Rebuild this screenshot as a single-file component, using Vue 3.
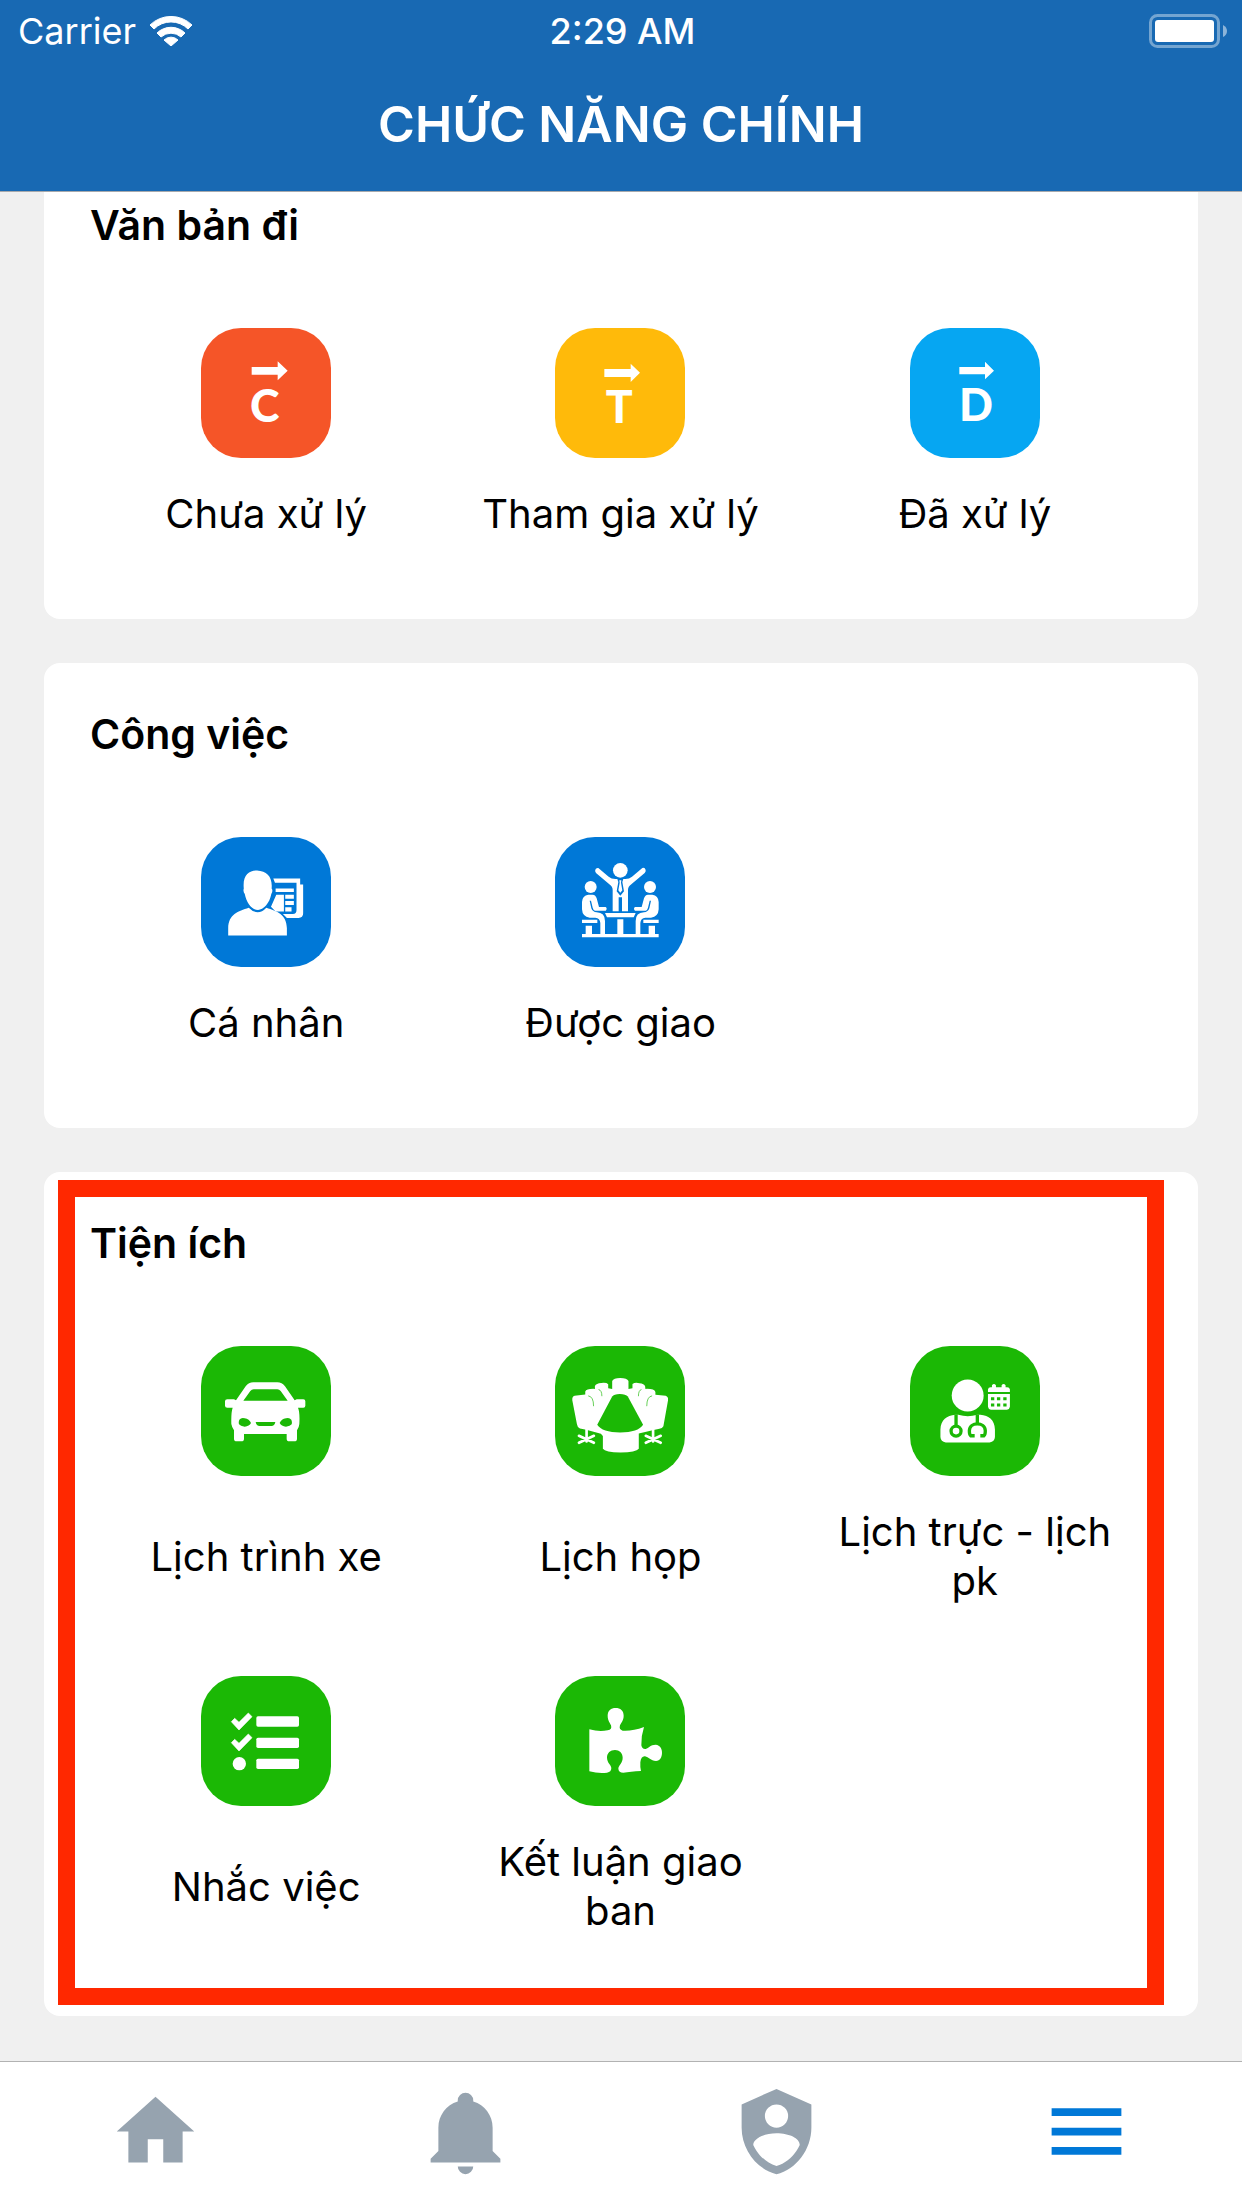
<script setup>
import { ref } from 'vue'

// Tile glyphs: white by default, currentColor is the tile colour and cuts shapes out.
const glyphs = {
  pending: {
    box: '0 0 390 390',
    body: `<path d="M152 117H230V100L260 128L230 157V140H152Z"/>
      <text x="191" y="281" text-anchor="middle" font-family="Lato, sans-serif" font-weight="900" font-size="134">C</text>`
  },
  joined: {
    box: '0 0 390 390',
    body: `<path d="M148 123H227V107L255 134L227 162V147H148Z"/>
      <text x="193" y="286" text-anchor="middle" font-family="Lato, sans-serif" font-weight="900" font-size="134">T</text>`
  },
  done: {
    box: '0 0 390 390',
    body: `<path d="M148 117H225V101L252 128L225 154V139H148Z"/>
      <text x="198" y="278" text-anchor="middle" font-family="Lato, sans-serif" font-weight="900" font-size="134">D</text>`
  },
  personal: {
    box: '63 51 392 390',
    body: `<path d="M281 175H362V193H371V280Q371 294 357 294H322L310 282H340Q351 282 351 270V188H286Z"/>
      <path d="M288 205H343V216H288ZM317 224H343V236H317ZM317 243H343V255H317ZM317 262H336V275H317ZM290 224H313V275H288L274 260Z"/>
      <path d="M145 347V325C146 282 175 274 207 263Q234 291 260 263C292 274 321 282 322 325V347Z"/>
      <path d="M192 205C188 165 208 151 232 151C262 153 279 170 276 205Q281 212 275 222C270 250 251 270 235 270C216 270 200 248 195 222Q189 213 192 205Z"/>`
  },
  assigned: {
    box: '45 51 390 390',
    body: `<circle cx="241" cy="151" r="22"/>
      <path d="M175 144L206 170Q214 177 226 177H256Q268 177 276 170L307 144Q315 142 317 150Q318 155 314 159L274 193Q264 200 264 210V274H246V232H236V274H218V210Q218 200 208 193L168 159Q163 153 167 147Q171 143 175 144Z"/>
      <path d="M232 177H250L247 186L252 214L241 227L230 214L235 186Z" fill="currentColor"/>
      <path d="M238 181H244L243 188L247 211L241 218L235 211L239 188Z"/>
      <path d="M195 279H287L281 292H201ZM232 298H250V342H232Z"/>
      <g><circle cx="152" cy="201" r="18"/>
      <path d="M145 224H158Q167 225 170 235L177 261H197Q203 266 197 272H165Q160 271 158 263L153 242H149L154 265Q158 276 170 277Q195 278 195 303V342H181V309Q180 294 166 293H149Q127 290 126 268V246Q127 226 145 224Z"/>
      <path d="M126 299H172V309H126ZM137 317H156V342H137Z"/></g>
      <g transform="translate(482 0) scale(-1 1)"><circle cx="152" cy="201" r="18"/>
      <path d="M145 224H158Q167 225 170 235L177 261H197Q203 266 197 272H165Q160 271 158 263L153 242H149L154 265Q158 276 170 277Q195 278 195 303V342H181V309Q180 294 166 293H149Q127 290 126 268V246Q127 226 145 224Z"/>
      <path d="M126 299H172V309H126ZM137 317H156V342H137Z"/></g>
      <path d="M126 342H356V352H126Z"/>`
  },
  car: {
    box: '63 51 390 390',
    body: `<path d="M168 214L197 172Q206 160 220 160H292Q306 160 315 172L344 214L350 211H370Q376 211 376 217V230Q376 236 370 236H354Q360 250 358 285Q357 296 351 304V329Q351 337 343 337H328Q320 337 320 329V315H192V329Q192 337 184 337H170Q162 337 162 329V304Q156 296 154 285Q153 250 158 236H142Q135 236 135 230V217Q135 211 142 211H162Z"/>
      <path d="M190 215L211 186Q215 181 221 181H292Q298 181 302 186L323 215ZM178 272Q184 265 194 268Q208 270 213 282Q208 292 194 293Q181 291 177 286Q175 279 178 272ZM334 272Q328 265 318 268Q304 270 299 282Q304 292 318 293Q331 291 335 286Q337 279 334 272ZM227 279H286Q284 291 274 291H239Q229 291 227 279Z" fill="currentColor"/>`
  },
  meeting: {
    box: '46 51 391 391',
    body: `<path d="M218 180V156Q222 147 242 147Q263 147 267 156V180L279 178V165Q287 160 300 163Q314 164 317 172L318 180Q345 179 348 189V198L379 201Q387 204 386 214L372 292Q369 299 360 300L346 303L298 314V360Q290 371 243 371Q197 371 190 360V322L184 315L140 303L121 299Q113 295 112 286L98 214Q97 203 105 201L137 197V188Q140 179 166 180V171Q170 163 185 162Q201 160 206 166V178Z"/>
      <path d="M218 203Q223 195 241 195Q259 195 265 203L311 288Q296 311 242 311Q188 311 173 288Z" fill="currentColor"/>
      <g fill="none" stroke="currentColor" stroke-width="2"><path d="M146 201Q162 203 162 232M177 182Q187 184 187 202M338 201Q322 203 322 232M306 182Q297 184 297 202"/></g>
      <g fill="none" stroke="#fff" stroke-width="8" stroke-linecap="round"><path d="M141 302V325M118 321L163 342M163 321L118 342M141 330V338M341 302V325M319 321L364 342M364 321L319 342M341 330V338"/></g>`
  },
  duty: {
    box: '45 51 390 391',
    body: `<circle cx="218" cy="200" r="48"/>
      <path d="M136 325V302C137 274 155 260 181 258H190Q218 267 247 258H256C282 260 299 274 300 302V325Q299 340 284 341H152Q137 340 136 325Z"/>
      <g fill="none" stroke="currentColor" stroke-width="10"><path d="M183 257V291M247 257V284"/><circle cx="183" cy="307" r="15"/><path d="M239 321H227Q223 318 223 306C224 278 270 278 271 306Q271 318 267 321H256"/></g>
      <path d="M279 189V182Q280 175 287 175H291V169Q297 162 303 169V175H320V169Q326 162 332 169V175H337Q344 175 345 182V189ZM279 195H345V234Q344 242 336 243H288Q280 242 279 234Z"/>
      <path d="M288 205H298V214H288ZM306 205H316V214H306ZM325 205H335V214H325ZM288 224H298V233H288ZM306 224H316V233H306ZM325 224H335V233H325Z" fill="currentColor"/>`
  },
  reminder: {
    box: '0 0 390 390',
    body: `<path d="M91 137L101 127L114 139L142 111L153 122L114 162ZM91 200L101 190L114 202L142 174L153 185L114 225Z" stroke="#fff" stroke-width="2" stroke-linejoin="round"/>
      <circle cx="115" cy="263" r="20"/>
      <rect x="166" y="121" width="128" height="31" rx="5"/>
      <rect x="166" y="185" width="128" height="31" rx="5"/>
      <rect x="166" y="248" width="128" height="31" rx="5"/>`
  },
  conclusion: {
    box: '0 0 390 390',
    body: `<path d="M103 160Q132 168 158 163Q172 161 168 148C165 140 158 134 158 119C158 104 168 96 182 96C196 96 206 104 206 119C206 134 198 140 195 148Q191 161 203 164Q232 166 267 153Q258 180 259 208Q261 220 272 219C282 216 286 206 302 206C316 207 321 219 321 230C321 243 315 254 303 255C287 255 281 243 270 241Q258 240 256 259Q255 274 258 285Q226 287 205 290Q191 290 190 278C191 266 203 262 203 245C203 231 193 222 180 222C166 222 156 231 156 245C157 262 168 266 169 276Q169 288 156 290Q130 293 103 286Z"/>`
  }
}

const sections = [
  {
    title: 'Văn bản đi',
    items: [
      { label: 'Chưa xử lý', glyph: 'pending', tone: 'orange' },
      { label: 'Tham gia xử lý', glyph: 'joined', tone: 'amber' },
      { label: 'Đã xử lý', glyph: 'done', tone: 'sky' }
    ]
  },
  {
    title: 'Công việc',
    items: [
      { label: 'Cá nhân', glyph: 'personal', tone: 'blue' },
      { label: 'Được giao', glyph: 'assigned', tone: 'blue' }
    ]
  },
  {
    title: 'Tiện ích',
    highlighted: true,
    items: [
      { label: 'Lịch trình xe', glyph: 'car', tone: 'green' },
      { label: 'Lịch họp', glyph: 'meeting', tone: 'green' },
      { label: 'Lịch trực - lịch pk', glyph: 'duty', tone: 'green' },
      { label: 'Nhắc việc', glyph: 'reminder', tone: 'green' },
      { label: 'Kết luận giao ban', glyph: 'conclusion', tone: 'green' }
    ]
  }
]

const tabs = [
  { id: 'home', name: 'Trang chủ', path: 'M10,20V14H14V20H19V12H22L12,3L2,12H5V20H10Z' },
  { id: 'alerts', name: 'Thông báo', path: 'M21,19V20H3V19L5,17V11C5,7.9 7.03,5.17 10,4.29C10,4.19 10,4.1 10,4A2,2 0 0,1 12,2A2,2 0 0,1 14,4C14,4.1 14,4.19 14,4.29C16.97,5.17 19,7.9 19,11V17L21,19M14,21A2,2 0 0,1 12,23A2,2 0 0,1 10,21' },
  { id: 'account', name: 'Tài khoản', path: 'M12,1L3,5V11C3,16.55 6.84,21.74 12,23C17.16,21.74 21,16.55 21,11V5L12,1M12,5A3,3 0 0,1 15,8A3,3 0 0,1 12,11A3,3 0 0,1 9,8A3,3 0 0,1 12,5M17.13,17C15.92,18.85 14.11,20.24 12,20.92C9.89,20.24 8.08,18.85 6.87,17C6.53,16.5 6.24,16 6,15.47C6,13.82 8.71,12.47 12,12.47C15.29,12.47 18,13.79 18,15.47C17.76,16 17.47,16.5 17.13,17Z' },
  { id: 'menu', name: 'Chức năng', path: 'M3,6H21V8H3V6M3,11H21V13H3V11M3,16H21V18H3V16Z' }
]

const activeTab = ref('menu')
</script>

<template>
  <div class="app">
    <header class="header">
      <div class="status">
        <div class="carrier">
          <span>Carrier</span>
          <svg class="wifi" viewBox="0 0 42 30" aria-hidden="true">
            <path d="M0 9A30 30 0 0 1 42 9L38 13A24 24 0 0 0 4 13ZM7 17A20 20 0 0 1 35 17L31 21A15 15 0 0 0 11 21ZM14 24A10 10 0 0 1 28 24L21 30Z" fill="#fff" stroke="#fff" stroke-width="1" stroke-linejoin="round" />
          </svg>
        </div>
        <div class="clock">2:29 AM</div>
        <div class="power">
          <svg class="battery" viewBox="0 0 78 34" aria-hidden="true">
            <rect x="1.5" y="1.5" width="68" height="31" rx="7" fill="none" stroke="#fff" stroke-opacity=".4" stroke-width="3" />
            <rect x="6" y="6" width="59" height="22" rx="3" fill="#fff" />
            <path d="M74 11Q78 13 78 17T74 23Z" fill="#fff" fill-opacity=".5" />
          </svg>
        </div>
      </div>
      <h1 class="title">CHỨC NĂNG CHÍNH</h1>
    </header>

    <main class="content">
      <div class="list">
        <section v-for="section in sections" :key="section.title" class="card">
          <h2 class="card-title">{{ section.title }}</h2>
          <div class="grid">
            <button v-for="item in section.items" :key="item.label" type="button" class="item">
              <span class="tile" :class="item.tone">
                <svg :viewBox="glyphs[item.glyph].box" fill="#fff" aria-hidden="true" v-html="glyphs[item.glyph].body"></svg>
              </span>
              <span class="label">{{ item.label }}</span>
            </button>
          </div>
          <div v-if="section.highlighted" class="marker"></div>
        </section>
      </div>
    </main>

    <nav class="tabs">
      <button
        v-for="tab in tabs"
        :key="tab.id"
        type="button"
        class="tab"
        :class="{ active: tab.id === activeTab }"
        :aria-label="tab.name"
        @click="activeTab = tab.id"
      >
        <svg viewBox="0 0 24 24" fill="currentColor" aria-hidden="true"><path :d="tab.path" /></svg>
      </button>
    </nav>
  </div>
</template>

<style>
body {
  background: #f0f0f0;
}
</style>

<style scoped>
.app {
  display: flex;
  flex-direction: column;
  min-height: 100vh;
  background: #f0f0f0;
  color: #000;
  font-family: Inter, "Noto Sans", sans-serif;
}

.header {
  position: relative;
  z-index: 1;
  padding-bottom: 37px;
  border-bottom: 1px solid #a7a9ac;
  background: #1869b3;
  color: #fff;
}

.status {
  display: grid;
  grid-template-columns: 1fr auto 1fr;
  align-items: center;
  height: 60px;
  padding: 0 15px 0 18px;
  font-size: 36px;
  line-height: 62px;
}

.carrier {
  display: flex;
  align-items: center;
  gap: 14px;
}

.wifi {
  width: 42px;
  height: 30px;
}

.clock {
  font-weight: 500;
}

.power {
  display: flex;
  justify-content: flex-end;
}

.battery {
  width: 78px;
  height: 34px;
}

.title {
  margin: 34px 0 0;
  font-size: 50px;
  font-weight: 600;
  line-height: 60px;
  text-align: center;
}

.content {
  flex: 1;
  overflow: hidden;
}

/* The list is scrolled a little way under the header. */
.list {
  display: flex;
  flex-direction: column;
  gap: 44px;
  margin-top: -38px;
  padding: 0 44px 44px;
}

.card {
  position: relative;
  padding: 46px 46px 81px 45px;
  border-radius: 16px;
  background: #fff;
}

.card-title {
  margin: 0 0 78px 1px;
  font-size: 41px;
  font-weight: 600;
  line-height: 50px;
}

.grid {
  display: grid;
  grid-template-columns: repeat(3, 1fr);
  row-gap: 71px;
}

.item {
  display: flex;
  flex-direction: column;
  align-items: center;
  gap: 31px;
  padding: 0;
  border: 0;
  background: none;
  color: inherit;
  font: inherit;
}

.tile {
  width: 130px;
  height: 130px;
  border-radius: 40px;
  overflow: hidden;
}

.tile svg {
  display: block;
  width: 100%;
  height: 100%;
}

.orange {
  background: #f55528;
  color: #f55528;
}

.amber {
  background: #ffba0a;
  color: #ffba0a;
}

.sky {
  background: #06a6f2;
  color: #06a6f2;
}

.blue {
  background: #0078d7;
  color: #0078d7;
}

.green {
  background: #1bb805;
  color: #1bb805;
}

.label {
  display: flex;
  flex: 1;
  align-items: center;
  padding: 0 32px;
  font-size: 40px;
  line-height: 49px;
}

.marker {
  position: absolute;
  inset: 8px 34px 11px 14px;
  border: 17px solid #ff2800;
  pointer-events: none;
}

.tabs {
  display: flex;
  padding: 23px 0 30px;
  border-top: 1px solid #b2b2b2;
  background: #fff;
}

.tab {
  display: flex;
  flex: 1;
  justify-content: center;
  padding: 0;
  border: 0;
  background: none;
  color: #96a3af;
}

.tab.active {
  color: #0078d7;
}

.tab svg {
  width: 93px;
  height: 93px;
}
</style>
